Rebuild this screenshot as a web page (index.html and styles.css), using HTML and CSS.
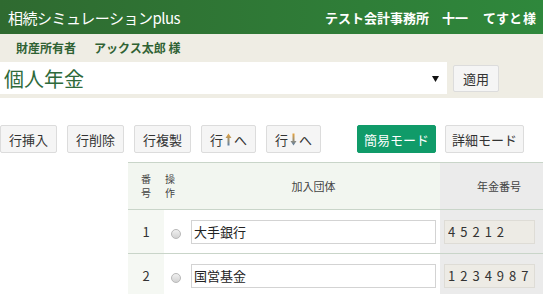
FILE: index.html
```html
<!DOCTYPE html>
<html lang="ja">
<head>
    <meta charset="UTF-8">
    <meta name="viewport" content="width=device-width, initial-scale=1.0">
    <title>相続シミュレーションplus</title>
    <link rel="stylesheet" href="styles.css">
</head>
<body>
    <header class="topbar">
        <div class="brand">相続シミュレーションplus</div>
        <div class="office">テスト会計事務所<span class="sp">十一</span><span class="sp2">てすと</span>様</div>
    </header>
    <section class="owner-panel">
        <div class="owner">財産所有者<span class="owner-name">アックス太郎 様</span></div>
        <div class="picker">
            <div class="select-box">
                <span class="select-text">個人年金</span>
                <svg class="select-arrow" width="7" height="6" viewBox="0 0 7 6"><polygon points="0,0 7,0 3.5,6" fill="#111"/></svg>
            </div>
            <button class="btn btn-apply">適用</button>
        </div>
    </section>
    <div class="toolbar">
        <div class="row-tools">
            <button class="btn">行挿入</button>
            <button class="btn">行削除</button>
            <button class="btn">行複製</button>
            <button class="btn">行<svg class="arr" width="7" height="13" viewBox="0 0 7 13"><defs><linearGradient id="gu" x1="0" y1="0" x2="0" y2="1"><stop offset="0" stop-color="#e8a33a"/><stop offset="1" stop-color="#5b7fa6"/></linearGradient></defs><path d="M3.5 0.5 L6.5 5 H4.5 V12.5 H2.5 V5 H0.5 Z" fill="url(#gu)"/></svg>へ</button>
            <button class="btn">行<svg class="arr" width="7" height="13" viewBox="0 0 7 13"><defs><linearGradient id="gd" x1="0" y1="0" x2="0" y2="1"><stop offset="0" stop-color="#e8a33a"/><stop offset="1" stop-color="#5b7fa6"/></linearGradient></defs><path d="M3.5 12.5 L6.5 8 H4.5 V0.5 H2.5 V8 H0.5 Z" fill="url(#gd)"/></svg>へ</button>
        </div>
        <div class="mode-tools">
            <button class="btn btn-mode active">簡易モード</button>
            <button class="btn btn-mode">詳細モード</button>
        </div>
    </div>
    <table class="grid">
        <colgroup>
            <col class="c-no">
            <col class="c-op">
            <col class="c-org">
            <col class="c-num">
        </colgroup>
        <thead>
            <tr>
                <th class="no">番<br>号</th>
                <th class="op">操<br>作</th>
                <th>加入団体</th>
                <th class="num">年金番号</th>
            </tr>
        </thead>
        <tbody>
            <tr>
                <td class="no">1</td>
                <td class="op"><input type="radio" name="row"></td>
                <td class="org"><input type="text" class="text-in" value="大手銀行"></td>
                <td class="num"><input type="text" class="num-in" value="45212" disabled></td>
            </tr>
            <tr>
                <td class="no">2</td>
                <td class="op"><input type="radio" name="row"></td>
                <td class="org"><input type="text" class="text-in" value="国営基金"></td>
                <td class="num"><input type="text" class="num-in" value="12349876" disabled></td>
            </tr>
        </tbody>
    </table>
</body>
</html>
```

FILE: styles.css
```css
html, body {
    margin: 0;
    padding: 0;
    overflow: hidden;
}
body {
    font-family: "Noto Sans CJK JP", "Noto Sans", sans-serif;
    color: #333;
    background: #fff;
}
.topbar {
    height: 34px;
    display: flex;
    align-items: center;
    justify-content: space-between;
    padding: 0 7px 0 8px;
    background: linear-gradient(to right, #2f6a30, #2f883c);
    color: #fff;
}
.brand {
    font-size: 15px;
    letter-spacing: -0.5px;
}
.office {
    font-size: 13px;
    font-weight: bold;
}
.office .sp {
    margin-left: 13px;
}
.office .sp2 {
    margin-left: 15px;
    margin-right: 1px;
}
.owner-panel {
    background: #efede4;
    padding-bottom: 4px;
}
.owner {
    height: 28px;
    line-height: 28px;
    padding-left: 16px;
    font-size: 12px;
    font-weight: bold;
    color: #2f6233;
}
.owner-name {
    margin-left: 18px;
}
.picker {
    display: flex;
    align-items: center;
    gap: 6px;
}
.select-box {
    width: 447px;
    height: 32px;
    background: #fff;
    display: flex;
    align-items: center;
    justify-content: space-between;
    padding: 0 8px 0 4px;
    box-sizing: border-box;
}
.select-text {
    font-size: 20px;
    color: #2e6a3a;
}
.select-arrow {
    margin-top: 1px;
}
.btn {
    font-family: inherit;
    font-size: 13px;
    color: #333;
    background: #f5f5f5;
    border: 1px solid #dcdcdc;
    border-radius: 2px;
    height: 28px;
    padding: 0 8px;
    display: inline-flex;
    align-items: center;
    justify-content: center;
    cursor: pointer;
}
.btn-apply {
    width: 46px;
    height: 27px;
    padding: 0;
}
.arr {
    margin: 0 2px;
}
.toolbar {
    display: flex;
    align-items: center;
    margin-top: 27px;
}
.row-tools {
    display: flex;
    gap: 10px;
}
.mode-tools {
    display: flex;
    gap: 9px;
    margin-left: 36px;
}
.btn-mode {
    width: 79px;
    padding: 0;
}
.btn-mode.active {
    background: #109b69;
    border-color: #109b69;
    color: #fff;
}
.grid {
    margin: 9px 0 0 128px;
    border-collapse: collapse;
    table-layout: fixed;
    width: 430px;
}
.c-no { width: 36px; }
.c-op { width: 23px; }
.c-org { width: 253px; }
.c-num { width: 118px; }
.grid th {
    height: 46px;
    padding: 0;
    font-size: 11px;
    font-weight: normal;
    line-height: 13px;
    color: #444;
    background: #f2f6f0;
    border-top: 1px solid #c9d5c9;
    border-bottom: 1px solid #c9d5c9;
    text-align: center;
}
.grid th.no,
.grid th.op {
    font-size: 10px;
    line-height: 14.5px;
}
.grid th.op {
    text-align: left;
    padding-left: 1px;
}
.grid th.num,
.grid td.num {
    background: #ebebeb;
}
.grid td {
    height: 43px;
    padding: 0;
    border-bottom: 1px solid #c9d5c9;
    font-size: 13px;
}
.grid td.no {
    text-align: center;
    background: #f5f8f3;
}
.grid td.op {
    text-align: center;
}
.grid td.org {
    padding: 0 4px;
}
.grid td.num {
    padding-left: 4px;
}
.grid input[type="radio"] {
    appearance: none;
    width: 10px;
    height: 10px;
    margin: 2px 0 0 0;
    border: 1px solid #b9b9b9;
    border-radius: 50%;
    background: linear-gradient(#f0f0f0, #d2d2d2);
    vertical-align: middle;
}
.text-in,
.num-in {
    display: block;
    height: 24px;
    box-sizing: border-box;
    font-family: inherit;
    font-size: 13px;
    color: #222;
    outline: none;
}
.text-in {
    width: 245px;
    border: 1px solid #d3d3d3;
    padding: 0 2px;
    background: #fff;
}
.num-in {
    width: 91px;
    border: 1px solid #dedcd6;
    background: #edebe5;
    padding: 0 3px;
    letter-spacing: 5px;
    color: #333;
}
```
